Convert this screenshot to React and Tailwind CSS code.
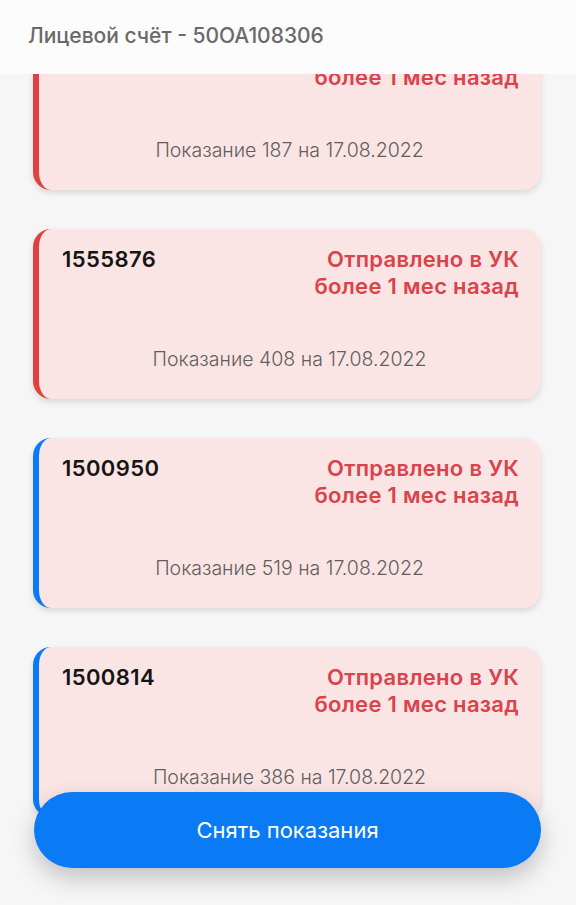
import React from 'react';

const readings = [
  { id: '1555870', value: 187, bar: 'border-l-[#e0413f]' },
  { id: '1555876', value: 408, bar: 'border-l-[#e0413f]' },
  { id: '1500950', value: 519, bar: 'border-l-[#0a7bf5]' },
  { id: '1500814', value: 386, bar: 'border-l-[#0a7bf5]' },
];

const MeterCard = ({ item }) => (
  <div
    className={`h-[170px] rounded-[18px] border-l-[6px] ${item.bar} bg-[#fbe4e4] shadow-[0_3px_6px_rgba(0,0,0,0.12)] flex flex-col pl-[23px] pr-[22px] pt-[17px]`}
  >
    <div className="flex justify-between items-start">
      <span className="text-[22px] leading-[27px] font-semibold tracking-[0.4px] text-[#151515]">{item.id}</span>
      <span className="text-[22px] leading-[27px] font-semibold tracking-[0.3px] text-[#d9434b] text-right">
        Отправлено в УК
        <br />
        более 1 мес назад
      </span>
    </div>
    <p className="mt-[47px] text-center text-[19.5px] leading-[24px] font-light text-[#5f5f5f] pr-[2px]">
      Показание {item.value} на 17.08.2022
    </p>
  </div>
);

const App = () => {
  return (
    <div
      className="relative h-[905px] w-[576px] overflow-hidden bg-[#f6f6f6]"
      style={{ fontFamily: 'Inter, "Noto Sans", sans-serif' }}
    >
      {/* scrolled list, first card runs under the header */}
      <div className="flex flex-col gap-[39px] px-[33px] pt-[20px] mr-[2px]">
        {readings.map(item => (
          <MeterCard key={item.id} item={item} />
        ))}
      </div>

      {/* header */}
      <div className="absolute top-0 left-0 right-0 h-[74px] bg-[#fdfcfc] flex items-center pl-[28px] pb-[3px]">
        <h1 className="text-[21px] font-medium text-[#6a6a6a]">Лицевой счёт - 50OA108306</h1>
      </div>

      {/* action button */}
      <div className="absolute left-[34px] right-[35px] top-[792px]">
        <button className="w-full h-[76px] rounded-full bg-[#0a7bf5] text-white text-[22px] shadow-[0_10px_24px_rgba(0,0,0,0.22)]">
          Снять показания
        </button>
      </div>
    </div>
  );
};

export default App;
